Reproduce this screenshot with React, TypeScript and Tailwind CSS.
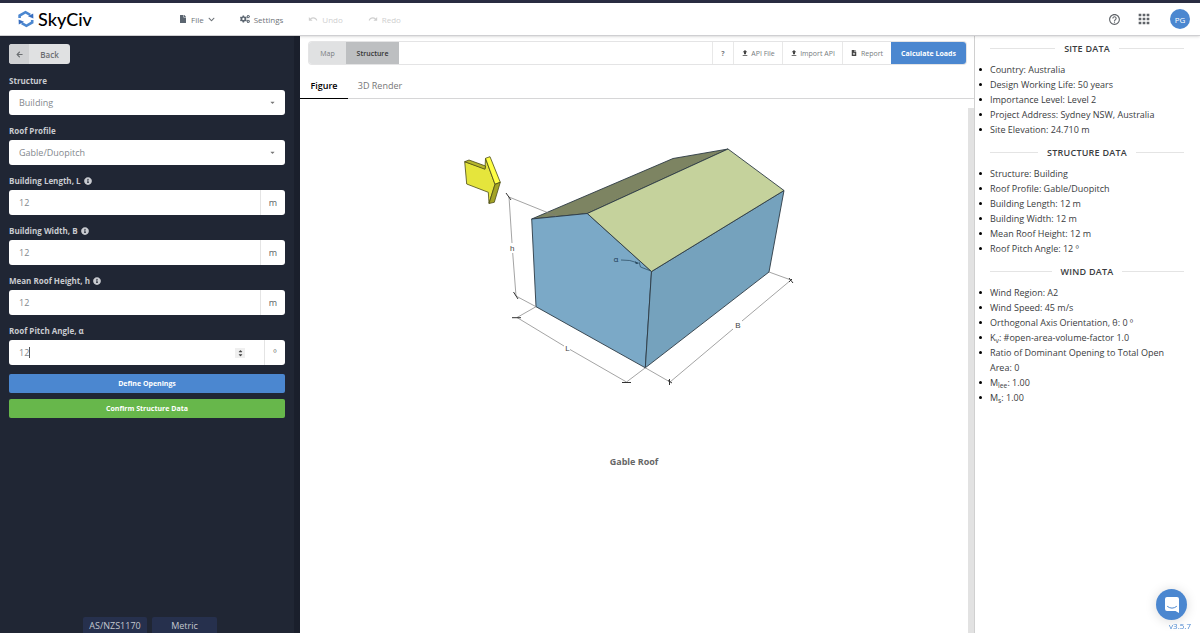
import React, { useState } from "react";
import {
	FaArrowLeft,
	FaCaretDown,
	FaCaretUp,
	FaChevronDown,
	FaCogs,
	FaFile,
	FaFileMedical,
	FaInfoCircle,
} from "react-icons/fa";
import {
	MdApps,
	MdFileUpload,
	MdHelpOutline,
	MdRedo,
	MdUndo,
} from "react-icons/md";

interface DataSection {
	title: string;
	items: React.ReactNode[];
}

const sections: DataSection[] = [
	{
		title: "SITE DATA",
		items: [
			"Country: Australia",
			"Design Working Life: 50 years",
			"Importance Level: Level 2",
			"Project Address: Sydney NSW, Australia",
			"Site Elevation: 24.710 m",
		],
	},
	{
		title: "STRUCTURE DATA",
		items: [
			"Structure: Building",
			"Roof Profile: Gable/Duopitch",
			"Building Length: 12 m",
			"Building Width: 12 m",
			"Mean Roof Height: 12 m",
			"Roof Pitch Angle: 12 º",
		],
	},
	{
		title: "WIND DATA",
		items: [
			"Wind Region: A2",
			"Wind Speed: 45 m/s",
			"Orthogonal Axis Orientation, θ: 0 º",
			<>
				K<sub>v</sub>: #open-area-volume-factor 1.0
			</>,
			"Ratio of Dominant Opening to Total Open Area: 0",
			<>
				M<sub>lee</sub>: 1.00
			</>,
			<>
				M<sub>s</sub>: 1.00
			</>,
		],
	},
];

function Logo() {
	return (
		<a href="#" className="flex items-center gap-1 text-black">
			<svg width="16" height="18" viewBox="0 0 16 18" fill="none">
				<path
					d="M1.6 8V5.6L7.5 2.2L12.2 4.9"
					stroke="#4b87d0"
					strokeWidth="2.6"
				/>
				<path d="M10 6.2L15.4 8.6L15.2 3.6Z" fill="#3a6fc0" />
				<path
					d="M14.2 10V12.4L8.4 15.8L3.7 13.1"
					stroke="#4b87d0"
					strokeWidth="2.6"
				/>
				<path d="M6 11.8L0.6 9.4L0.8 14.4Z" fill="#3a6fc0" />
			</svg>
			<span className="font-['Lato',sans-serif] text-[18px] leading-[20px] font-medium">
				SkyCiv
			</span>
		</a>
	);
}

function SelectField({ id, label, value }: { id: string; label: string; value: string }) {
	return (
		<div className="flex flex-col gap-[2px]">
			<label htmlFor={id} className="text-[8px] leading-[15px] font-bold text-[#c9cbd0]">
				{label}
			</label>
			<div className="relative">
				<select
					id={id}
					defaultValue={value}
					className="block h-[25px] w-full appearance-none rounded-[3px] bg-white px-[10px] text-[9px] text-[#83888d]"
				>
					<option>{value}</option>
				</select>
				<FaCaretDown className="pointer-events-none absolute top-[9px] right-[9px] size-[7px] text-[#777]" />
			</div>
		</div>
	);
}

interface NumberFieldProps {
	id: string;
	label: string;
	unit: string;
	info?: boolean;
	active?: boolean;
}

function NumberField({ id, label, unit, info, active }: NumberFieldProps) {
	const [value, setValue] = useState("12");

	return (
		<div className="flex flex-col gap-[2px]">
			<label
				htmlFor={id}
				className="flex items-center gap-[3px] text-[8px] leading-[15px] font-bold text-[#c9cbd0]"
			>
				{label}
				{info && <FaInfoCircle className="size-[8px]" />}
			</label>
			<div className="relative flex h-[25px] overflow-hidden rounded-[3px] bg-white">
				<input
					id={id}
					type="text"
					inputMode="numeric"
					value={value}
					onChange={(e) => setValue(e.target.value)}
					className="min-w-0 flex-1 px-[10px] text-[9px] text-[#83888d] outline-none"
				/>
				{active && (
					<>
						<span className="absolute top-[7px] left-[20px] h-[11px] w-px bg-[#555]" />
						<span className="mr-[19px] flex h-[10px] w-[10px] flex-col items-center justify-center self-center bg-[#efefef] text-[#444]">
							<FaCaretUp className="-mb-px size-[7px]" />
							<FaCaretDown className="-mt-px size-[7px]" />
						</span>
					</>
				)}
				<span
					className={`flex items-center justify-center border-l border-[#e4e4e4] text-[9px] text-[#5b6065] ${
						active ? "w-[21px]" : "w-[25px]"
					}`}
				>
					{unit}
				</span>
			</div>
		</div>
	);
}

function GableFigure() {
	return (
		<svg
			width="348"
			height="245"
			viewBox="460 145 348 245"
			fontFamily="'Liberation Sans', sans-serif"
			fontSize="8"
			textAnchor="middle"
		>
			{/* building */}
			<g stroke="#2c3a44" strokeWidth="0.9" strokeLinejoin="round">
				<path d="M531.7 219L673 158.5L728 149L587.3 213.5Z" fill="#7d8462" />
				<path d="M531.7 219L587.3 213.5L651.5 271.5L645.3 367.8L536 306.7Z" fill="#7ba9c7" />
				<path d="M651.5 271.5L784 190.5L769 272L645.3 367.8Z" fill="#75a2bd" />
				<path d="M587.3 213.5L728 149L784 190.5L651.5 271.5Z" fill="#c5d29c" />
			</g>

			{/* wind arrow */}
			<g stroke="#4a4a16" strokeWidth="0.8" strokeLinejoin="round">
				<path d="M464.7 161.7L485 168.6L485.5 158.5L495 184.3L489 203.3L488.3 192.3L466.7 184Z" fill="#e5e53c" />
				<path d="M464.7 161.7L469 160L485.5 166L485 169.3Z" fill="#b5b52c" />
				<path d="M485.5 158.3L490 156.7L500.3 182.3L495 184.3Z" fill="#ffff45" />
				<path d="M495 184.3L500.3 182.3L494.3 202.3L489 203.5Z" fill="#a3a325" />
			</g>

			{/* dimension lines */}
			<g fill="none" stroke="#7c7c7c" strokeWidth="0.7">
				<path d="M509 197L512 243M512.7 253L516 296" />
				<path d="M509 197L556 216M516 296L536 306.7" />
				<path d="M536 306.7L517 317.5L564 346M570 349.5L626.5 382L645.3 367.8" />
				<path d="M645.3 367.8L670 382L733 329M742 321L791 280L769 272" />
			</g>
			<g stroke="#333" strokeWidth="1">
				<path d="M506 193L511 200M513.5 292L518 299" />
				<path d="M512 317.7H521M622 382.5H631" />
				<path d="M669.5 379V385M668 380.5L672 383M789 278L793 283M789 282L792 279" />
			</g>
			<path d="M621 260Q630 259.5 638 263M639 262L640.5 267L651 271" fill="none" stroke="#26465c" strokeWidth="0.7" />
			<path d="M639 263.5L635 261.2L635.8 264Z" fill="#26465c" />
			<g fill="#444">
				<text x="512.3" y="251">h</text>
				<text x="567.5" y="351">L</text>
				<text x="738" y="328">B</text>
				<text x="616" y="262" fill="#1e3a55" fontFamily="'Open Sans', sans-serif">α</text>
			</g>
		</svg>
	);
}

export default function App() {
	const [tab, setTab] = useState("figure");

	return (
		<div className="flex min-h-screen flex-col bg-white font-['Open_Sans',sans-serif] text-[9px] leading-[15px]">
			<div className="h-[3px] bg-[#2a2d42]" />

			{/* HEADER */}
			<header className="relative z-10 flex h-[33px] items-center justify-between border-b border-[#cfcfd2] bg-white pr-[10px] pl-[18px] shadow-sm">
				<div className="flex items-center">
					<div className="w-[161px]">
						<Logo />
					</div>
					<nav className="flex items-center gap-[25px] text-[8px] text-[#6f7479]">
						<button className="flex items-center gap-1">
							<FaFile className="size-[8px] text-[#5b6570]" />
							File
							<FaChevronDown className="size-[7px]" />
						</button>
						<button className="flex items-center gap-1">
							<FaCogs className="size-[10px] text-[#5b6570]" />
							Settings
						</button>
						<button className="flex items-center gap-1 text-[#cfcfcf]" disabled>
							<MdUndo className="size-[10px]" />
							Undo
						</button>
						<button className="flex items-center gap-1 text-[#cfcfcf]" disabled>
							<MdRedo className="size-[10px]" />
							Redo
						</button>
					</nav>
				</div>
				<div className="flex items-center text-[#5f6368]">
					<button aria-label="Help">
						<MdHelpOutline className="size-[13px]" />
					</button>
					<button aria-label="Apps" className="mr-[18px] ml-[15px]">
						<MdApps className="size-[16px]" />
					</button>
					<button className="size-[20px] rounded-full bg-[#4b87d0] text-[8px] text-white">PG</button>
				</div>
			</header>

			<div className="flex flex-1">
				{/* SIDEBAR */}
				<aside className="flex w-[300px] shrink-0 flex-col border-r-[6px] border-[#1a1f2c] bg-[#202634]">
					<div className="flex flex-col px-[9px] pt-[8px]">
						<button className="mb-[9px] flex h-[20px] w-[61px] overflow-hidden rounded-[3px] bg-[#e0e1e2] text-[8px] font-semibold text-[#6a6d70]">
							<span className="flex h-full w-[20px] items-center justify-center bg-[#d0d1d3]">
								<FaArrowLeft className="size-[7px]" />
							</span>
							<span className="flex h-full flex-1 items-center justify-center">Back</span>
						</button>
						<div className="flex flex-col gap-[8px]">
							<SelectField id="structure" label="Structure" value="Building" />
							<SelectField id="roof" label="Roof Profile" value="Gable/Duopitch" />
							<NumberField id="length" label="Building Length, L" unit="m" info />
							<NumberField id="width" label="Building Width, B" unit="m" info />
							<NumberField id="height" label="Mean Roof Height, h" unit="m" info />
							<NumberField id="pitch" label="Roof Pitch Angle, α" unit="º" active />
						</div>
						<button className="mt-[9px] h-[19px] rounded-[2px] bg-[#4b87d0] text-[7px] font-bold text-white">
							Define Openings
						</button>
						<button className="mt-[6px] h-[19px] rounded-[2px] bg-[#67b74b] text-[7px] font-bold text-white">
							Confirm Structure Data
						</button>
					</div>
					<div className="mt-auto flex justify-center gap-[5px] pl-[6px] text-[#c3c7cf]">
						<button className="h-[16px] w-[64px] rounded-t-[2px] bg-[#26304d]">AS/NZS1170</button>
						<button className="h-[16px] w-[65px] rounded-t-[2px] bg-[#26304d]">Metric</button>
					</div>
				</aside>

				{/* MAIN */}
				<main className="flex min-w-0 flex-1 flex-col">
					<div className="mt-[6px] mr-[8px] ml-[9px] flex h-[22px] overflow-hidden rounded-[3px] text-[7px] text-[#777c80] shadow-[0_0_0_1px_#e4e4e5]">
						<button className="w-[37px] bg-[#e0e1e2]">Map</button>
						<button className="w-[53px] bg-[#bdbfc1] font-semibold text-[#333]">Structure</button>
						<div className="flex-1" />
						<button className="w-[21px] border-l border-[#e8e8e8] font-bold">?</button>
						<button className="flex w-[49px] items-center justify-center gap-[2px] border-l border-[#e8e8e8]">
							<MdFileUpload className="size-[8px] text-[#444]" />
							API File
						</button>
						<button className="flex w-[60px] items-center justify-center gap-[2px] border-l border-[#e8e8e8]">
							<MdFileUpload className="size-[8px] text-[#444]" />
							Import API
						</button>
						<button className="flex w-[49px] items-center justify-center gap-[4px] border-l border-[#e8e8e8]">
							<FaFileMedical className="size-[6px] text-[#444]" />
							Report
						</button>
						<button className="w-[75px] bg-[#4b87d0] font-bold text-white">Calculate Loads</button>
					</div>

					<div className="mt-[8px] flex h-[27px] border-b border-[#d6d6d7]">
						<button
							onClick={() => setTab("figure")}
							className={`-mb-px w-[48px] ${tab === "figure" ? "border-b border-black font-semibold text-black" : "text-[#777]"}`}
						>
							Figure
						</button>
						<button
							onClick={() => setTab("render")}
							className={`-mb-px w-[64px] ${tab === "render" ? "border-b border-black font-semibold text-black" : "text-[#777]"}`}
						>
							3D Render
						</button>
					</div>

					<div className="mt-[9px] flex flex-1 flex-col items-center border-r-[6px] border-[#e2e2e2] pt-[37px]">
						<GableFigure />
						<p className="mt-[64px] font-bold text-[#666]">Gable Roof</p>
					</div>
				</main>

				{/* DATA PANEL */}
				<aside className="flex w-[226px] shrink-0 flex-col border-l border-[#d0d0d0] pr-4 pl-[15px] text-[#3a3c40]">
					{sections.map((section) => (
						<section key={section.title}>
							<h2 className="mt-[5px] mb-[6px] flex items-center gap-[9px] font-semibold tracking-wide before:h-px before:flex-1 before:bg-[#e4e4e4] after:h-px after:flex-1 after:bg-[#e4e4e4]">
								{section.title}
							</h2>
							<ul className="pb-[3px]">
								{section.items.map((item, i) => (
									<li
										key={i}
										className="relative before:absolute before:top-[6px] before:-left-[11px] before:size-[3px] before:rounded-full before:bg-black"
									>
										{item}
									</li>
								))}
							</ul>
						</section>
					))}
				</aside>
			</div>

			<button
				aria-label="Open chat"
				className="fixed right-[13px] bottom-[13px] flex size-[31px] items-center justify-center rounded-full bg-[#4b87d0] shadow-[0_1px_12px_rgba(0,0,0,0.15)]"
			>
				<svg width="14" height="16" viewBox="0 0 14 16">
					<path d="M2 0H12Q14 0 14 2V16L10.5 14H2Q0 14 0 12V2Q0 0 2 0Z" fill="#fff" />
					<path d="M2.5 9.5Q7 13 11.5 9.5" fill="none" stroke="#4b87d0" strokeWidth="1" strokeLinecap="round" />
				</svg>
			</button>
			<a href="#" className="fixed right-[9px] bottom-0 text-[8px] text-[#4b87d0]">
				v3.5.7
			</a>
		</div>
	);
}
